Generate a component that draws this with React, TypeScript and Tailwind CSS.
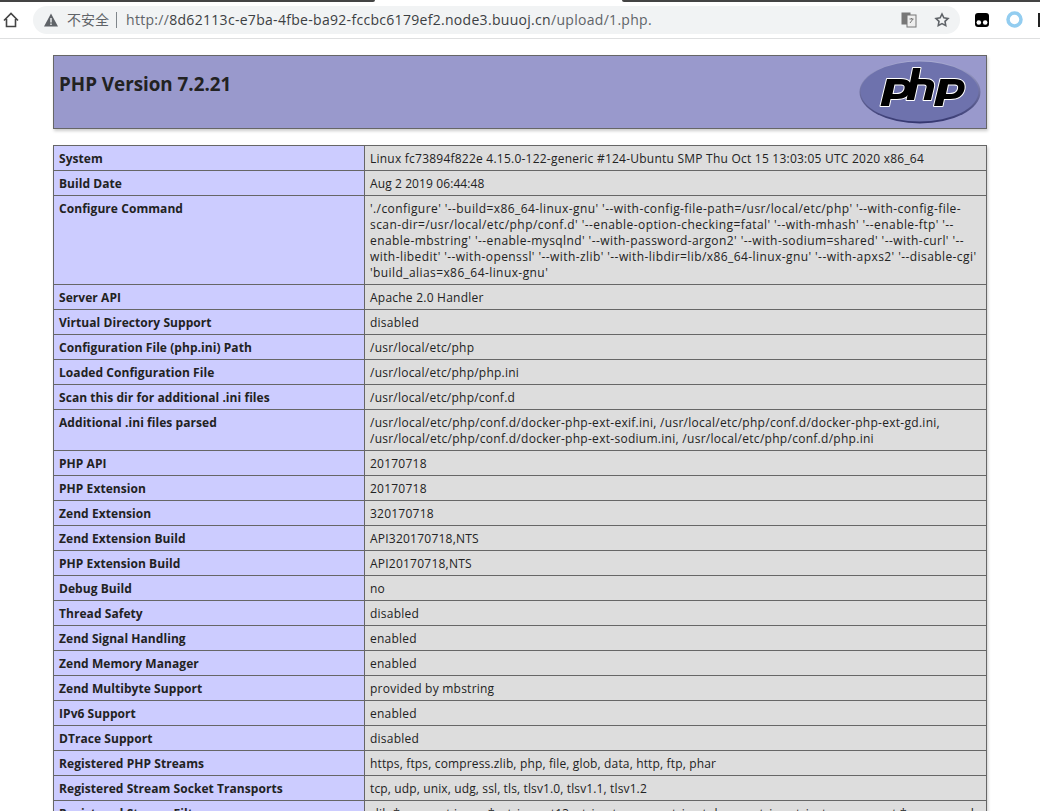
const rows: [string, string[], string?][] = [
  ["System", ["Linux fc73894f822e 4.15.0-122-generic #124-Ubuntu SMP Thu Oct 15 13:03:05 UTC 2020 x86_64"]],
  ["Build Date", ["Aug 2 2019 06:44:48"], "tracking-[0.1px]"],
  ["Configure Command", [
    "'./configure' '--build=x86_64-linux-gnu' '--with-config-file-path=/usr/local/etc/php' '--with-config-file-",
    "scan-dir=/usr/local/etc/php/conf.d' '--enable-option-checking=fatal' '--with-mhash' '--enable-ftp' '--",
    "enable-mbstring' '--enable-mysqlnd' '--with-password-argon2' '--with-sodium=shared' '--with-curl' '--",
    "with-libedit' '--with-openssl' '--with-zlib' '--with-libdir=lib/x86_64-linux-gnu' '--with-apxs2' '--disable-cgi'",
    "'build_alias=x86_64-linux-gnu'",
  ], "tracking-[0.42px]"],
  ["Server API", ["Apache 2.0 Handler"]],
  ["Virtual Directory Support", ["disabled"]],
  ["Configuration File (php.ini) Path", ["/usr/local/etc/php"]],
  ["Loaded Configuration File", ["/usr/local/etc/php/php.ini"]],
  ["Scan this dir for additional .ini files", ["/usr/local/etc/php/conf.d"]],
  ["Additional .ini files parsed", [
    "/usr/local/etc/php/conf.d/docker-php-ext-exif.ini, /usr/local/etc/php/conf.d/docker-php-ext-gd.ini,",
    "/usr/local/etc/php/conf.d/docker-php-ext-sodium.ini, /usr/local/etc/php/conf.d/php.ini",
  ], "tracking-[0.28px]"],
  ["PHP API", ["20170718"]],
  ["PHP Extension", ["20170718"]],
  ["Zend Extension", ["320170718"]],
  ["Zend Extension Build", ["API320170718,NTS"]],
  ["PHP Extension Build", ["API20170718,NTS"]],
  ["Debug Build", ["no"]],
  ["Thread Safety", ["disabled"]],
  ["Zend Signal Handling", ["enabled"]],
  ["Zend Memory Manager", ["enabled"]],
  ["Zend Multibyte Support", ["provided by mbstring"]],
  ["IPv6 Support", ["enabled"]],
  ["DTrace Support", ["disabled"]],
  ["Registered PHP Streams", ["https, ftps, compress.zlib, php, file, glob, data, http, ftp, phar"], "tracking-[0.15px]"],
  ["Registered Stream Socket Transports", ["tcp, udp, unix, udg, ssl, tls, tlsv1.0, tlsv1.1, tlsv1.2"], "tracking-[0.13px]"],
  ["Registered Stream Filters", ["zlib.*, convert.iconv.*, string.rot13, string.toupper, string.tolower, string.strip_tags, convert.*, consumed,"]],
];

const letters = [
  "M21.500 46 L28 19 H42 C50 19 53 23 52 29 C50.500 36 45 39 38 39 H31.500 L30 46 Z M33.500 34 H37.500 C42 34 45 32 45.500 28.500 C46 25.500 45 24.500 41.500 24.500 H35.500 Z",
  "M54 8 H61.500 L59.500 19 H66 C73 19 76 22 75 27 L72 40 H64.500 L67.500 27.500 C68 25.500 67 24.500 65 24.500 H58.500 L55 40 H47.500 Z",
  "M75 46 L81.500 19 H95.500 C103.500 19 106.500 23 105.500 29 C104 36 98.500 39 91.500 39 H85 L83.500 46 Z M87 34 H91 C95.500 34 98.500 32 99 28.500 C99.500 25.500 98.500 24.500 95 24.500 H89 Z",
];

function PhpLogo() {
  return (
    <svg width="122" height="64" viewBox="0 0 122 64">
      <defs>
        <linearGradient id="edge" x1="0" y1="0" x2="0" y2="1">
          <stop offset="0" stopColor="#a9abd2" />
          <stop offset="1" stopColor="#34366f" />
        </linearGradient>
      </defs>
      <ellipse cx="61" cy="32" rx="60.500" ry="31.500" fill="url(#edge)" />
      <ellipse cx="60.500" cy="31.500" rx="59" ry="30" fill="#6e72ad" />
      {letters.map((d) => (
        <path key={d} d={d} fill="#fff" stroke="#fff" strokeWidth="2" strokeLinejoin="round" fillRule="evenodd" />
      ))}
      {letters.map((d) => (
        <path key={d + "k"} d={d} fill="#000" fillRule="evenodd" />
      ))}
    </svg>
  );
}

export default function App() {
  return (
    <div className="h-[811px] w-[1040px] overflow-hidden bg-white font-['Open_Sans','Noto_Sans_CJK_SC',sans-serif] text-[#222]">
      {/* browser chrome */}
      <div className="relative h-[39px] border-b border-[#dedfe0] bg-white">
        <div className="absolute left-0 top-0 h-[2px] w-[375px] rounded-br bg-[#444]" />
        <div className="absolute right-0 top-0 h-[2px] w-[418px] rounded-bl bg-[#444]" />
        <div className="flex h-full items-center">
          <svg className="ml-[3px] mt-[1px]" width="16" height="16" viewBox="0 0 16 16" fill="none" stroke="#444" strokeWidth="1.600">
            <path d="M1 8.500 8 1.500l7 7M3.500 7v7.500h9V7" />
          </svg>
          <div className="ml-[14px] mt-[1px] flex h-[28px] w-[927px] items-center rounded-full bg-[#f1f3f4] pl-[11px]">
            <svg width="14" height="14" viewBox="0 0 14 14" fill="#5f6368">
              <path fillRule="evenodd" d="M7 .5 14 13.500H0z M6.300 5v4.500h1.400V5z M6.300 10.500V12h1.400v-1.500z" />
            </svg>
            <span className="ml-[9px] text-[14px] text-[#5f6368]">不安全</span>
            <span className="ml-[7px] h-[16px] w-px bg-[#80868b]" />
            <span className="ml-[9px] text-[14px] tracking-[0.3px] text-[#3c4043]">
              <span className="text-[#5f6368]">http://</span>8d62113c-e7ba-4fbe-ba92-fccbc6179ef2.node3.buuoj.cn<span className="text-[#5f6368]">/upload/1.php.</span>
            </span>
            <svg className="ml-auto" width="16" height="16" viewBox="0 0 16 16">
              <rect x="0.500" y="0.500" width="9" height="12" fill="#777" />
              <rect x="6" y="3" width="9" height="12" fill="#eee" stroke="#777" />
              <path d="M8.500 7h4M10.500 6v1M9 11l3-4" stroke="#777" fill="none" />
            </svg>
            <svg className="ml-[17px] mr-[10px]" width="16" height="16" viewBox="0 0 24 24" fill="none" stroke="#5f6368" strokeWidth="2.400">
              <path d="m12 3 2.800 5.800 6.200.9-4.500 4.400 1.100 6.300-5.600-3-5.600 3 1.100-6.300L3 9.700l6.200-.9z" />
            </svg>
          </div>
          <svg className="ml-[15px] mt-[1px]" width="14" height="14" viewBox="0 0 14 14">
            <path d="M0 3a3 3 0 0 1 3-3h8a3 3 0 0 1 3 3v8a3 3 0 0 1-3 3H3a3 3 0 0 1-3-3z" fill="#000" />
            <circle cx="3.800" cy="9.500" r="2.300" fill="#fff" />
            <circle cx="10.200" cy="9.500" r="2.300" fill="#fff" />
          </svg>
          <svg className="ml-[17px] mt-[1px]" width="17" height="17" viewBox="0 0 17 17" fill="none">
            <circle cx="8.500" cy="8.500" r="6.500" stroke="#93cdf0" strokeWidth="3.500" />
          </svg>
          <div className="ml-[15px] mt-[1px] h-[14px] w-[2px] bg-[#222]" />
        </div>
      </div>

      {/* phpinfo */}
      <div className="ml-[53px] mt-[16px] w-[934px]">
        <div className="flex h-[74px] justify-between border border-[#666] bg-[#9999cc] pl-[5px] pr-[5px] shadow-[1px_2px_3px_#ccc]">
          <h1 className="mt-[14px] text-[18.800px] leading-[28px] font-bold">PHP Version 7.2.21</h1>
          <div className="mt-[4px]"><PhpLogo /></div>
        </div>
        <table className="mt-[16px] w-[934px] table-fixed border-collapse text-[12px] leading-[16px] shadow-[1px_2px_3px_#ccc]">
          <colgroup>
            <col className="w-[311px]" />
            <col />
          </colgroup>
          <tbody>
            {rows.map(([name, lines, spacing]) => (
              <tr key={name}>
                <td className="border border-[#666] bg-[#ccccff] px-[5px] pt-[5px] pb-[3px] align-top font-bold tracking-[0.06px]">{name}</td>
                <td className={`border border-[#666] bg-[#dddddd] px-[5px] pt-[5px] pb-[3px] align-top whitespace-nowrap ${spacing ?? "tracking-[0.23px]"}`}>
                  {lines.map((line) => <div key={line}>{line}</div>)}
                </td>
              </tr>
            ))}
          </tbody>
        </table>
      </div>
    </div>
  );
}
